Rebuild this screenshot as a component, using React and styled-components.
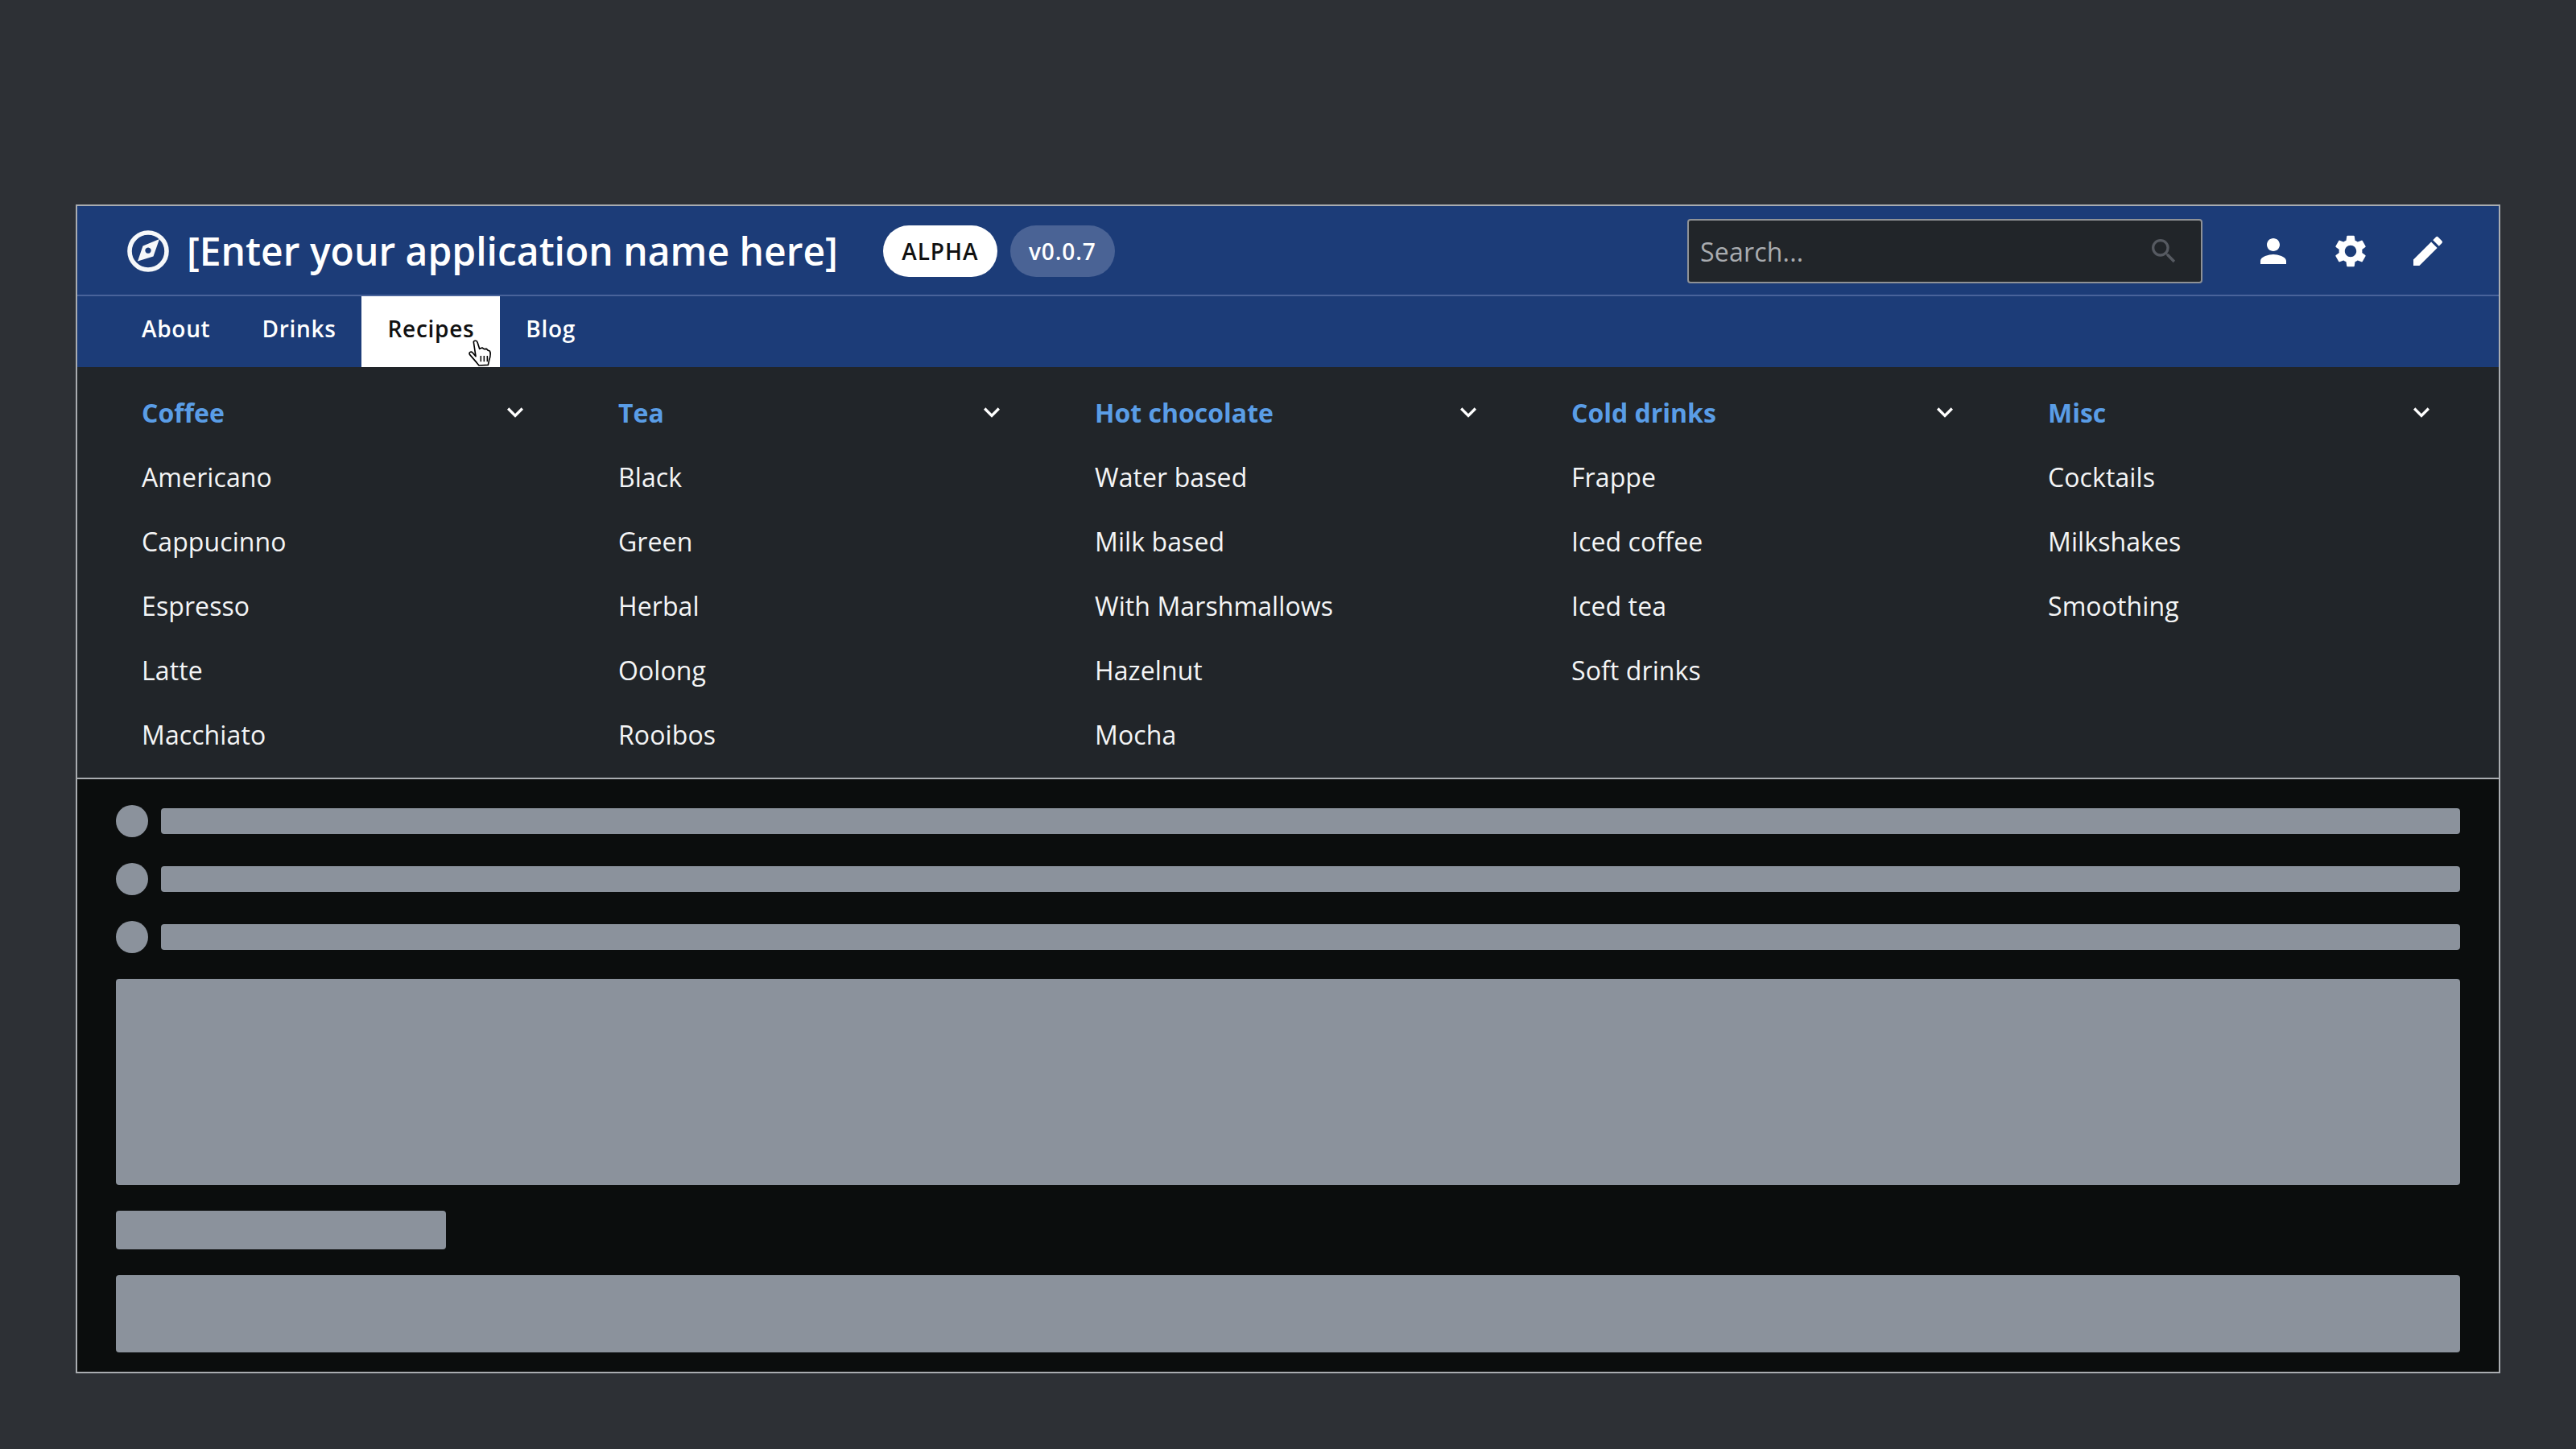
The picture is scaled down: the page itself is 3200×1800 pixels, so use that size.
import React from 'react';
import styled, { createGlobalStyle } from 'styled-components';
import { MdPerson, MdSettings, MdEdit, MdSearch, MdKeyboardArrowDown } from 'react-icons/md';

const Global = createGlobalStyle`
  html, body { margin: 0; padding: 0; background: #2d3035; }
  * { box-sizing: border-box; }
`;
const Page = styled.div`
  width: 3200px; height: 1800px; padding: 254px 94px 94px;
  background: #2d3035; font-family: "Open Sans", sans-serif;
`;
const Frame = styled.div`
  border: 2px solid #a9acb0; height: 1452px; display: flex; flex-direction: column; background: #0b0d0d;
`;
const Header = styled.header`
  height: 110px; background: #1c3c78; display: flex; align-items: center; padding: 2px 64px 0 62px;
`;
const Divider = styled.div`height: 2px; background: #49639a;`;
const Logo = styled.svg`display: block; flex: none;`;
const Title = styled.h1`
  margin: 0 0 0 22px; font-size: 48px; font-weight: 600; color: #fff; white-space: nowrap; line-height: 64px;
`;
const Badge = styled.span`
  height: 64px; border-radius: 32px; display: inline-flex; align-items: center; justify-content: center;
  width: ${p => p.$w}px; font-size: 28px; font-weight: 550; letter-spacing: 0.9px; margin-left: ${p => p.$ml}px;
  background: ${p => p.$light ? '#fff' : '#4a6395'}; color: ${p => p.$light ? '#111' : '#fff'};
`;
const Search = styled.div`
  margin-left: auto; width: 640px; height: 80px; background: #212529; border: 2px solid #8f9296; border-radius: 4px;
  display: flex; align-items: center; justify-content: space-between; padding: 0 26px 0 14px;
  color: #a9acb0; font-size: 32px; letter-spacing: 0.2px;
`;
const SearchIcon = styled(MdSearch)`color: #565a61;`;
const Actions = styled.div`display: flex; align-items: center; gap: 48px; margin-left: 64px;`;
const Action = styled.span`display: flex; color: #fff;`;
const Nav = styled.nav`
  height: 88px; background: #1c3c78; display: flex; padding-left: 48px;
`;
const Tab = styled.a`
  position: relative; display: flex; align-items: center; padding: 0 32px 8px; font-size: 28px; font-weight: 550;
  letter-spacing: 0.7px;
  color: ${p => p.$active ? '#111' : '#fff'}; background: ${p => p.$active ? '#fff' : 'transparent'};
`;
const Cursor = styled.svg`position: absolute; left: 120px; top: 42px;`;
const Menu = styled.section`
  height: 510px; background: #212529; padding: 16px 0 0 80px;
  display: grid; grid-template-columns: repeat(5, 484px); column-gap: 108px;
`;
const Column = styled.div`display: flex; flex-direction: column;`;
const ColHead = styled.div`
  height: 80px; display: flex; align-items: center; justify-content: space-between;
  font-size: 32px; font-weight: 700; color: #5a9de6;
`;
const Chevron = styled(MdKeyboardArrowDown)`color: #fff;`;
const Item = styled.div`height: 80px; display: flex; align-items: center; font-size: 32px; color: #f4f5f6; letter-spacing: 0.1px;`;
const Rule = styled.div`height: 2px; background: #a9acb0;`;
const Content = styled.main`
  flex: 1; padding: 32px 48px 24px; display: flex; flex-direction: column; background: #0b0d0d;
`;
const Row = styled.div`display: flex; align-items: center; gap: 16px; height: 40px; margin-bottom: 32px;`;
const Dot = styled.div`width: 40px; height: 40px; border-radius: 50%; background: #8b929c;`;
const Line = styled.div`flex: 1; height: 32px; border-radius: 4px; background: #8b929c;`;
const Block = styled.div`
  height: ${p => p.$h}px; width: ${p => p.$w || '100%'}; border-radius: 4px; background: #8b929c;
  margin-top: ${p => p.$mt || 0}px;
`;

const cols = [
  ['Coffee', ['Americano', 'Cappucinno', 'Espresso', 'Latte', 'Macchiato']],
  ['Tea', ['Black', 'Green', 'Herbal', 'Oolong', 'Rooibos']],
  ['Hot chocolate', ['Water based', 'Milk based', 'With Marshmallows', 'Hazelnut', 'Mocha']],
  ['Cold drinks', ['Frappe', 'Iced coffee', 'Iced tea', 'Soft drinks']],
  ['Misc', ['Cocktails', 'Milkshakes', 'Smoothing']],
];

const Compass = () => (
  <Logo width="52" height="52" viewBox="0 0 52 52">
    <circle cx="26" cy="26" r="23" fill="none" stroke="#f6f8fa" strokeWidth="5.6" />
    <path fillRule="evenodd" fill="#f6f8fa" d="M40 11 L32.5 32.5 L13 38.5 L19.5 19.5 Z M26 21.4a3.7 3.7 0 1 0 0.01 0Z" />
  </Logo>
);

const HandCursor = () => (
  <Cursor width="50" height="50" viewBox="0 0 150 150">
    <path d="M58 45C58 38 70 38 72 45L80 70L90 66L97 71L106 70L112 76L118 78C122 85 120 100 116 112L112 130L78 132L70 122L44 92C38 84 48 78 54 84L66 98Z" fill="#fff" stroke="#000" strokeWidth="5" strokeLinejoin="round" />
    <path d="M85 96V118M97 96V118M109 96V118" stroke="#000" strokeWidth="4.5" />
  </Cursor>
);

export default function App() {
  return (
    <Page>
      <Global />
      <Frame>
        <Header>
          <Compass />
          <Title>[Enter your application name here]</Title>
          <Badge $light $ml={56} $w={142}>ALPHA</Badge>
          <Badge $ml={16} $w={130}>v0.0.7</Badge>
          <Search>Search...<SearchIcon size={40} /></Search>
          <Actions>
            <Action><MdPerson size={48} /></Action>
            <Action><MdSettings size={48} /></Action>
            <Action><MdEdit size={48} /></Action>
          </Actions>
        </Header>
        <Divider />
        <Nav>
          <Tab>About</Tab>
          <Tab>Drinks</Tab>
          <Tab $active>Recipes<HandCursor /></Tab>
          <Tab>Blog</Tab>
        </Nav>
        <Menu>
          {cols.map(([h, items]) => (
            <Column key={h}>
              <ColHead>{h}<Chevron size={40} /></ColHead>
              {items.map(i => <Item key={i}>{i}</Item>)}
            </Column>
          ))}
        </Menu>
        <Rule />
        <Content>
          {[0, 1, 2].map(i => <Row key={i}><Dot /><Line /></Row>)}
          <Block $h={256} />
          <Block $h={48} $w="410px" $mt={32} />
          <Block $h={96} $mt={32} />
        </Content>
      </Frame>
    </Page>
  );
}
